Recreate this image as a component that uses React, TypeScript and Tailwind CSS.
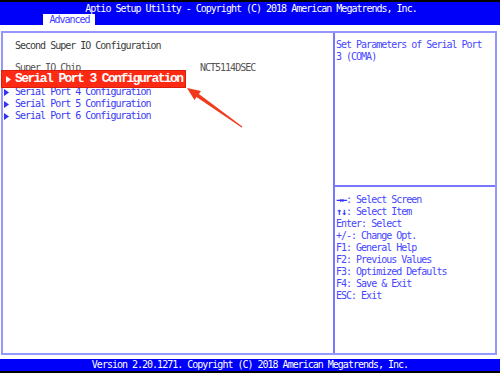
import React from 'react';

const mono = { fontFamily: '"DejaVu Sans Mono", "Liberation Mono", monospace' };

const Tri = ({ color }: { color: string }) => (
  <svg width="5" height="7" viewBox="0 0 5 7" className="shrink-0">
    <polygon points="0,0 5,3.5 0,7" fill={color} />
  </svg>
);

const items = ['Serial Port 4 Configuration', 'Serial Port 5 Configuration', 'Serial Port 6 Configuration'];

const help = [
  ['→←', ': Select Screen'],
  ['↑↓', ': Select Item'],
  ['', 'Enter: Select'],
  ['', '+/-: Change Opt.'],
  ['', 'F1: General Help'],
  ['', 'F2: Previous Values'],
  ['', 'F3: Optimized Defaults'],
  ['', 'F4: Save & Exit'],
  ['', 'ESC: Exit'],
];

export default function App() {
  return (
    <div
      className="relative w-[500px] h-[373px] bg-white flex flex-col overflow-hidden text-[10px] leading-[12px] tracking-[-1px]"
      style={mono}
    >
      <div className="h-[2px] bg-black" />

      {/* header */}
      <div className="h-[23px] bg-[#0000fa] flex flex-col">
        <div className="h-[12px] pt-[1px] text-white text-center pl-[2px]">
          Aptio Setup Utility - Copyright (C) 2018 American Megatrends, Inc.
        </div>
        <div className="h-[11px] flex">
          <div className="ml-[43px] w-[52px] h-[11px] bg-white text-[#3c3cff] leading-[11px] text-center pl-[1px]">
            Advanced
          </div>
        </div>
      </div>

      <div className="h-[6px]" />

      {/* main panel */}
      <div className="ml-[1px] w-[496px] h-[324px] border-2 border-[#9696ff] flex">
        <div className="w-[332px] border-r-2 border-[#7878ff] flex flex-col pt-[7px]">
          <div className="pl-[12px] text-[#3a3a3a]">Second Super IO Configuration</div>
          <div className="h-[12px]" />
          <div className="flex text-[#555]">
            <span className="pl-[12px] w-[197px] -mt-[2px]">Super IO Chip</span>
            <span className="-mt-[2px]">NCT5114DSEC</span>
          </div>
          <div className="h-[12px]" />
          {items.map((t) => (
            <div key={t} className="flex items-center h-[12px] pl-[1px] text-[#3838f5]">
              <Tri color="#3232f0" />
              <span className="pl-[6px]">{t}</span>
            </div>
          ))}
        </div>

        <div className="flex-1 flex flex-col text-[#4646ff]">
          <div className="h-[152px] pt-[6px] pl-[1px]">
            <div>Set Parameters of Serial Port</div>
            <div>3 (COMA)</div>
          </div>
          <div className="h-[2px] bg-[#7878ff]" />
          <div className="pt-[7px] pl-[1px]">
            {help.map(([k, v]) => (
              <div key={v}>
                {k && <span className="font-bold text-[#3030ff]">{k}</span>}
                {v}
              </div>
            ))}
          </div>
        </div>
      </div>

      <div className="h-[4px]" />

      {/* footer */}
      <div className="h-[12px] bg-[#0000fa] text-white text-center">
        Version 2.20.1271. Copyright (C) 2018 American Megatrends, Inc.
      </div>
      <div className="flex-1 bg-black" />

      {/* highlighted item annotation */}
      <div
        className="absolute left-[1px] top-[70px] w-[185px] h-[18px] bg-[#ff2a14] border border-[#d8200c] flex items-center pl-[4px] text-white font-bold text-[13px] tracking-[-1.6px]"
        style={{ fontFamily: '"Liberation Mono", "DejaVu Sans Mono", monospace' }}
      >
        <Tri color="#ffffff" />
        <span className="pl-[4px]">Serial Port 3 Configuration</span>
      </div>

      {/* arrow */}
      <svg className="absolute left-0 top-0" width="500" height="373" viewBox="0 0 500 373">
        <polygon
          points="187,88 201,91 198.9,93.9 242.3,126.6 241.7,127.4 196.5,97.1 194.5,100"
          fill="#f03a1c"
        />
      </svg>
    </div>
  );
}
